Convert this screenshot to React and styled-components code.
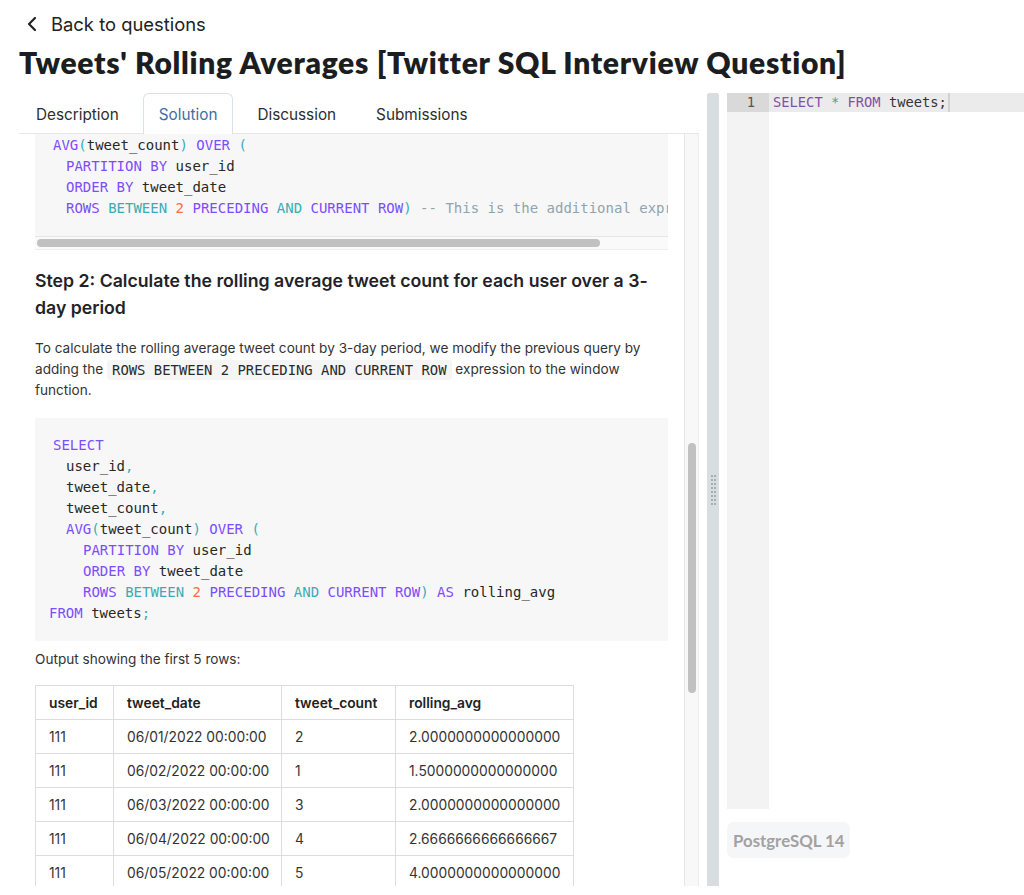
import React from 'react';
import styled, { createGlobalStyle } from 'styled-components';
import { ChevronLeft } from 'lucide-react';

const GlobalStyle = createGlobalStyle`
  html, body { margin: 0; padding: 0; background: #ffffff; }
  body {
    font-family: Inter, "Noto Sans", Arial, sans-serif;
    color: #333333;
    font-size: 14px;
  }
  * { box-sizing: border-box; }
`;

const Page = styled.div`
  width: 1024px;
  height: 895px;
  overflow: hidden;
  display: flex;
  flex-direction: column;
  padding: 12px 0 9px 19px;
`;

const BackLink = styled.a`
  display: flex;
  align-items: center;
  gap: 7px;
  height: 24px;
  margin-left: 1px;
  font-size: 18.4px;
  color: #222222;
  text-decoration: none;
  cursor: pointer;
`;

const Title = styled.h1`
  margin: 8px 0 0;
  height: 36px;
  line-height: 36px;
  font-family: Lato, "Open Sans", sans-serif;
  font-weight: 800;
  font-size: 30px;
  letter-spacing: 0.7px;
  color: #1b1d21;
  white-space: nowrap;
`;

const Main = styled.div`
  flex: 1;
  min-height: 0;
  display: flex;
  margin-top: 13px;
`;

const LeftPanel = styled.div`
  width: 680px;
  display: flex;
  flex-direction: column;
  min-height: 0;
`;

const TabRow = styled.div`
  display: flex;
  gap: 8px;
  padding-left: 1px;
  height: 41px;
  border-bottom: 1px solid #e4e7eb;
`;

const Tab = styled.div`
  height: ${p => (p.$active ? '41px' : '40px')};
  padding: 1px 15px 0;
  display: flex;
  align-items: center;
  font-size: 15.3px;
  color: ${p => (p.$active ? '#3c6ea6' : '#2d2d2d')};
  border: 1px solid ${p => (p.$active ? '#d9e1ea' : 'transparent')};
  border-bottom: none;
  border-radius: 6px 6px 0 0;
  background: #ffffff;
  cursor: pointer;
`;

const ScrollArea = styled.div`
  flex: 1;
  min-height: 0;
  display: flex;
`;

const Viewport = styled.div`
  flex: 1;
  min-width: 0;
  overflow: hidden;
  padding: 0 16px;
`;

const VTrack = styled.div`
  width: 15px;
  background: #f8f8f8;
  border-left: 1px solid #e6e6e6;
  border-right: 1px solid #ececec;
  padding: 309px 0 0 3px;
`;

const VThumb = styled.div`
  width: 8px;
  height: 250px;
  border-radius: 4px;
  background: #c1c1c1;
`;

const CodeBlock = styled.div`
  background: #f7f7f7;
  padding: ${p => p.$pad};
  font-family: "DejaVu Sans Mono", "Liberation Mono", monospace;
  font-size: 14px;
  line-height: 21px;
  white-space: pre;
  overflow: hidden;
  margin-top: ${p => p.$mt || '0px'};
`;

const CodeLine = styled.div`
  padding-left: ${p => p.$indent}px;
  height: 21px;
`;

const kindColor = {
  k: '#7c4dff',
  o: '#39adb5',
  n: '#f76d47',
  c: '#90a4ae',
  p: '#272727',
};

const Tok = styled.span`
  color: ${p => kindColor[p.$kind]};
`;

const HScroll = styled.div`
  height: 14px;
  background: #fafafa;
  border-top: 1px solid #e6e6e6;
  border-bottom: 1px solid #eeeeee;
  padding: 2px 0 0 2px;
`;

const HThumb = styled.div`
  width: 563px;
  height: 8px;
  border-radius: 4px;
  background: #c1c1c1;
`;

const StepHeading = styled.h3`
  margin: 17px 0 0;
  font-size: 17.7px;
  line-height: 27px;
  font-weight: 600;
  color: #1f2328;
`;

const Para = styled.p`
  margin: ${p => p.$mt || '0px'} 0 0;
  font-size: 13.6px;
  line-height: 21px;
  color: #333333;
`;

const InlineCode = styled.code`
  display: inline-block;
  height: 20px;
  line-height: 20px;
  vertical-align: top;
  margin-top: 0.5px;
  font-family: "DejaVu Sans Mono", "Liberation Mono", monospace;
  font-size: 13.9px;
  background: #f5f5f5;
  border-radius: 3px;
  padding: 0 5px;
  color: #2a2a2a;
`;

const Table = styled.table`
  margin-top: 15px;
  border-collapse: collapse;
  table-layout: fixed;
  width: 538px;
  font-size: 13.8px;
  color: #333333;
`;

const Th = styled.th`
  text-align: left;
  font-weight: 600;
  color: #222222;
  height: 34px;
  padding: 0 13px;
  border: 1px solid #dddddd;
`;

const Td = styled.td`
  height: 34px;
  padding: 0 13px;
  border: 1px solid #dddddd;
  white-space: nowrap;
`;

const Splitter = styled.div`
  width: 12px;
  margin: 0 8px;
  background: #d8dde2;
  border-radius: 2px 2px 0 0;
  display: flex;
  align-items: center;
  justify-content: center;
`;

const Grip = styled.div`
  display: grid;
  grid-template-columns: 2px 2px;
  grid-auto-rows: 2px;
  column-gap: 1px;
  row-gap: 2px;
`;

const Dot = styled.span`
  background: #a9adb2;
`;

const EditorCol = styled.div`
  flex: 1;
  display: flex;
  flex-direction: column;
  align-items: flex-start;
`;

const EditorBox = styled.div`
  width: 100%;
  height: 716px;
  display: flex;
  font-family: "DejaVu Sans Mono", "Liberation Mono", monospace;
  font-size: 13.75px;
  line-height: 19px;
`;

const Gutter = styled.div`
  width: 42px;
  background: #f3f3f3;
`;

const GutterNum = styled.div`
  height: 19px;
  background: #d9d9d9;
  color: #555555;
  text-align: right;
  padding-right: 14px;
`;

const Lines = styled.div`
  flex: 1;
`;

const EditorLine = styled.div`
  height: 19px;
  background: #ebebeb;
  padding-left: 4px;
  display: flex;
  align-items: center;
  white-space: pre;
`;

const EdTok = styled.span`
  color: ${p => (p.$kind === 'k' ? '#8050a8' : p.$kind === 'o' ? '#3fa3a3' : '#333333')};
`;

const Cursor = styled.span`
  width: 2px;
  height: 19px;
  margin-left: 1px;
  background: #d2d2d2;
`;

const Badge = styled.div`
  margin-top: 13px;
  height: 36px;
  padding: 0 6px;
  display: flex;
  align-items: center;
  background: #f5f6f8;
  border-radius: 7px;
  font-family: Lato, "Open Sans", sans-serif;
  font-weight: 700;
  font-size: 16.8px;
  color: #a2a2a2;
`;

const block1 = [
  { i: 4, t: [['k', 'AVG'], ['o', '('], ['p', 'tweet_count'], ['o', ')'], ['p', ' '], ['k', 'OVER'], ['p', ' '], ['o', '(']] },
  { i: 17, t: [['k', 'PARTITION BY'], ['p', ' user_id']] },
  { i: 17, t: [['k', 'ORDER BY'], ['p', ' tweet_date']] },
  { i: 17, t: [['k', 'ROWS'], ['p', ' '], ['o', 'BETWEEN'], ['p', ' '], ['n', '2'], ['p', ' '], ['k', 'PRECEDING'], ['p', ' '], ['o', 'AND'], ['p', ' '], ['k', 'CURRENT ROW'], ['o', ')'], ['p', ' '], ['c', '-- This is the additional expression']] },
];

const block2 = [
  { i: 4, t: [['k', 'SELECT']] },
  { i: 17, t: [['p', 'user_id'], ['o', ',']] },
  { i: 17, t: [['p', 'tweet_date'], ['o', ',']] },
  { i: 17, t: [['p', 'tweet_count'], ['o', ',']] },
  { i: 17, t: [['k', 'AVG'], ['o', '('], ['p', 'tweet_count'], ['o', ')'], ['p', ' '], ['k', 'OVER'], ['p', ' '], ['o', '(']] },
  { i: 34, t: [['k', 'PARTITION BY'], ['p', ' user_id']] },
  { i: 34, t: [['k', 'ORDER BY'], ['p', ' tweet_date']] },
  { i: 34, t: [['k', 'ROWS'], ['p', ' '], ['o', 'BETWEEN'], ['p', ' '], ['n', '2'], ['p', ' '], ['k', 'PRECEDING'], ['p', ' '], ['o', 'AND'], ['p', ' '], ['k', 'CURRENT ROW'], ['o', ')'], ['p', ' '], ['k', 'AS'], ['p', ' rolling_avg']] },
  { i: 0, t: [['k', 'FROM'], ['p', ' tweets'], ['o', ';']] },
];

const rows = [
  ['111', '06/01/2022 00:00:00', '2', '2.0000000000000000'],
  ['111', '06/02/2022 00:00:00', '1', '1.5000000000000000'],
  ['111', '06/03/2022 00:00:00', '3', '2.0000000000000000'],
  ['111', '06/04/2022 00:00:00', '4', '2.6666666666666667'],
  ['111', '06/05/2022 00:00:00', '5', '4.0000000000000000'],
];

function Code({ lines }) {
  return lines.map((l, idx) => (
    <CodeLine key={idx} $indent={l.i}>
      {l.t.map(([k, s], j) => (
        <Tok key={j} $kind={k}>{s}</Tok>
      ))}
    </CodeLine>
  ));
}

export default function App() {
  return (
    <>
      <GlobalStyle />
      <Page>
        <BackLink>
          <ChevronLeft size={24} strokeWidth={2.2} color="#222" />
          Back to questions
        </BackLink>
        <Title>Tweets' Rolling Averages [Twitter SQL Interview Question]</Title>
        <Main>
          <LeftPanel>
            <TabRow>
              <Tab>Description</Tab>
              <Tab $active>Solution</Tab>
              <Tab>Discussion</Tab>
              <Tab>Submissions</Tab>
            </TabRow>
            <ScrollArea>
              <Viewport>
                <CodeBlock $pad="1px 14px 17px">
                  <Code lines={block1} />
                </CodeBlock>
                <HScroll>
                  <HThumb />
                </HScroll>
                <StepHeading>
                  Step 2: Calculate the rolling average tweet count for each user over a 3-day period
                </StepHeading>
                <Para $mt="17px">
                  To calculate the rolling average tweet count by 3-day period, we modify the previous query by adding the{' '}
                  <InlineCode>ROWS BETWEEN 2 PRECEDING AND CURRENT ROW</InlineCode> expression to the window function.
                </Para>
                <CodeBlock $pad="17px 14px" $mt="17px">
                  <Code lines={block2} />
                </CodeBlock>
                <Para $mt="8px">Output showing the first 5 rows:</Para>
                <Table>
                  <colgroup>
                    <col style={{ width: 78 }} />
                    <col style={{ width: 168 }} />
                    <col style={{ width: 114 }} />
                    <col style={{ width: 178 }} />
                  </colgroup>
                  <thead>
                    <tr>
                      <Th>user_id</Th>
                      <Th>tweet_date</Th>
                      <Th>tweet_count</Th>
                      <Th>rolling_avg</Th>
                    </tr>
                  </thead>
                  <tbody>
                    {rows.map((r, i) => (
                      <tr key={i}>
                        {r.map((c, j) => (
                          <Td key={j}>{c}</Td>
                        ))}
                      </tr>
                    ))}
                  </tbody>
                </Table>
              </Viewport>
              <VTrack>
                <VThumb />
              </VTrack>
            </ScrollArea>
          </LeftPanel>
          <Splitter>
            <Grip>
              {Array.from({ length: 16 }).map((_, i) => (
                <Dot key={i} />
              ))}
            </Grip>
          </Splitter>
          <EditorCol>
            <EditorBox>
              <Gutter>
                <GutterNum>1</GutterNum>
              </Gutter>
              <Lines>
                <EditorLine>
                  <EdTok $kind="k">SELECT</EdTok>
                  <EdTok> </EdTok>
                  <EdTok $kind="o">*</EdTok>
                  <EdTok> </EdTok>
                  <EdTok $kind="k">FROM</EdTok>
                  <EdTok> tweets;</EdTok>
                  <Cursor />
                </EditorLine>
              </Lines>
            </EditorBox>
            <Badge>PostgreSQL 14</Badge>
          </EditorCol>
        </Main>
      </Page>
    </>
  );
}
